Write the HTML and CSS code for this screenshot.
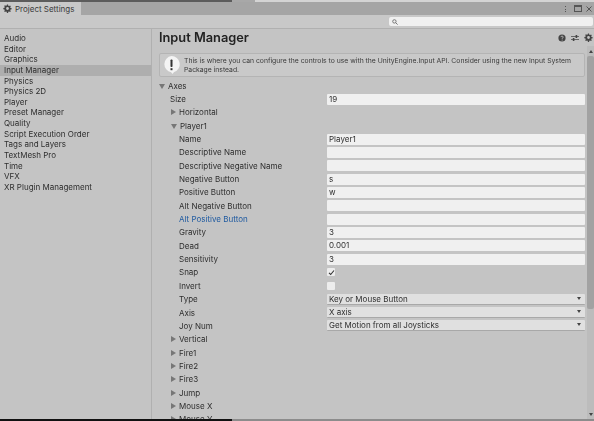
FILE: index.html
```html
<!DOCTYPE html>
<html lang="en">
<head>
  <meta charset="UTF-8">
  <title>Project Settings</title>
  <link rel="stylesheet" href="styles.css">
</head>
<body>
  <div class="window">
    <div class="edge edge-top"></div>
    <div class="tabbar">
      <div class="tab">
        <svg class="gear" width="9" height="9" viewBox="0 0 16 16"><path d="M7 1h2l.4 2 1.4.6 1.7-1.1 1.4 1.4-1.1 1.7.6 1.4 2 .4v2l-2 .4-.6 1.4 1.1 1.7-1.4 1.4-1.7-1.1-1.4.6-.4 2H7l-.4-2-1.4-.6-1.7 1.1-1.4-1.4 1.1-1.7-.6-1.4-2-.4V7l2-.4.6-1.4-1.1-1.7 1.4-1.4 1.7 1.1 1.4-.6zM8 5.5a2.5 2.5 0 1 0 0 5 2.5 2.5 0 0 0 0-5z" fill="#444" fill-rule="evenodd"/></svg>
        Project Settings
      </div>
      <div class="winbtns">
        <span class="dots"></span>
        <span class="maxbtn"></span>
        <svg width="6" height="6" viewBox="0 0 6 6"><path d="M.5.5l5 5M5.5.5l-5 5" stroke="#555" stroke-width="1"/></svg>
      </div>
    </div>
    <div class="toolbar">
      <div class="search">
        <svg width="6" height="6" viewBox="0 0 6 6"><circle cx="2.4" cy="2.4" r="1.7" fill="none" stroke="#777"/><path d="M3.6 3.6L5.6 5.6" stroke="#777"/></svg>
      </div>
    </div>
    <div class="panes">
      <ul class="sidebar">
        <li>Audio</li>
        <li>Editor</li>
        <li>Graphics</li>
        <li class="selected">Input Manager</li>
        <li>Physics</li>
        <li>Physics 2D</li>
        <li>Player</li>
        <li>Preset Manager</li>
        <li>Quality</li>
        <li>Script Execution Order</li>
        <li>Tags and Layers</li>
        <li>TextMesh Pro</li>
        <li>Time</li>
        <li>VFX</li>
        <li>XR Plugin Management</li>
      </ul>
      <div class="content">
        <div class="titlerow">
          <h1>Input Manager</h1>
          <div class="titleicons">
            <svg width="8" height="8" viewBox="0 0 8 8"><circle cx="4" cy="4" r="3.6" fill="#444"/><path d="M2.9 3.1c0-1.4 2.3-1.4 2.3 0 0 .9-1.1.8-1.1 1.7" fill="none" stroke="#ccc" stroke-width=".8"/><circle cx="4.1" cy="6" r=".5" fill="#ccc"/></svg>
            <svg width="8" height="8" viewBox="0 0 8 8"><path d="M0 2.5h8M0 5.5h8" stroke="#666"/><rect x="4.6" y="1" width="1.6" height="3" fill="#444"/><rect x="1.8" y="4" width="1.6" height="3" fill="#444"/></svg>
            <svg width="9" height="9" viewBox="0 0 16 16"><path d="M7 1h2l.4 2 1.4.6 1.7-1.1 1.4 1.4-1.1 1.7.6 1.4 2 .4v2l-2 .4-.6 1.4 1.1 1.7-1.4 1.4-1.7-1.1-1.4.6-.4 2H7l-.4-2-1.4-.6-1.7 1.1-1.4-1.4 1.1-1.7-.6-1.4-2-.4V7l2-.4.6-1.4-1.1-1.7 1.4-1.4 1.7 1.1 1.4-.6zM8 5.5a2.5 2.5 0 1 0 0 5 2.5 2.5 0 0 0 0-5z" fill="#444" fill-rule="evenodd"/></svg>
          </div>
        </div>
        <div class="scrollarea">
          <div class="inspector">
            <div class="helpbox">
              <svg class="helpicon" width="19" height="20" viewBox="0 0 19 20"><path d="M9.5 1a8.2 8.2 0 0 1 2.6 16l-1.6 2-1.4-1.8A8.2 8.2 0 0 1 9.5 1z" fill="#f4f4f4"/><rect x="8.5" y="4.5" width="2" height="7.5" rx=".8" fill="#333"/><rect x="8.5" y="13.2" width="2" height="2" fill="#333"/></svg>
              <p>This is where you can configure the controls to use with the UnityEngine.Input API. Consider using the new Input System Package instead.</p>
            </div>
            <div class="row head"><span class="arrow down"></span>Axes</div>
            <div class="row lvl1"><label>Size</label><span class="field">19</span></div>
            <div class="row fold1"><span class="arrow"></span>Horizontal</div>
            <div class="row fold1"><span class="arrow down"></span>Player1</div>
            <div class="row lvl2"><label>Name</label><span class="field">Player1</span></div>
            <div class="row lvl2"><label>Descriptive Name</label><span class="field"></span></div>
            <div class="row lvl2"><label>Descriptive Negative Name</label><span class="field"></span></div>
            <div class="row lvl2"><label>Negative Button</label><span class="field">s</span></div>
            <div class="row lvl2"><label>Positive Button</label><span class="field">w</span></div>
            <div class="row lvl2"><label>Alt Negative Button</label><span class="field"></span></div>
            <div class="row lvl2"><label class="hover">Alt Positive Button</label><span class="field"></span></div>
            <div class="row lvl2"><label>Gravity</label><span class="field">3</span></div>
            <div class="row lvl2"><label>Dead</label><span class="field">0.001</span></div>
            <div class="row lvl2"><label>Sensitivity</label><span class="field">3</span></div>
            <div class="row lvl2"><label>Snap</label><span class="check"><svg width="7" height="7" viewBox="0 0 7 7"><path d="M1 3.8l1.7 1.7L6 1.5" fill="none" stroke="#333" stroke-width="1.1"/></svg></span></div>
            <div class="row lvl2"><label>Invert</label><span class="check"></span></div>
            <div class="row lvl2"><label>Type</label><span class="select">Key or Mouse Button</span></div>
            <div class="row lvl2"><label>Axis</label><span class="select">X axis</span></div>
            <div class="row lvl2"><label>Joy Num</label><span class="select">Get Motion from all Joysticks</span></div>
            <div class="row fold1"><span class="arrow"></span>Vertical</div>
            <div class="row fold1"><span class="arrow"></span>Fire1</div>
            <div class="row fold1"><span class="arrow"></span>Fire2</div>
            <div class="row fold1"><span class="arrow"></span>Fire3</div>
            <div class="row fold1"><span class="arrow"></span>Jump</div>
            <div class="row fold1"><span class="arrow"></span>Mouse X</div>
            <div class="row fold1"><span class="arrow"></span>Mouse Y</div>
          </div>
          <div class="scrollbar">
            <span class="sb-up"></span>
            <div class="sb-track"><div class="sb-thumb"></div></div>
            <span class="sb-down"></span>
          </div>
        </div>
      </div>
    </div>
    <div class="edge edge-bottom"></div>
  </div>
</body>
</html>
```

FILE: styles.css
```css
* {
  box-sizing: border-box;
}

html, body {
  margin: 0;
  height: 100%;
  overflow: hidden;
}

body {
  background: #c4c4c4;
  color: #2e2e2e;
  font-family: "Inter", "Liberation Sans", sans-serif;
  font-size: 8px;
}

/* the source shot is soft, so take the edge off the text */
.window {
  height: 421px;
  display: flex;
  flex-direction: column;
  filter: blur(0.35px);
}

/* what's left of the editor behind the window */
.edge {
  height: 2px;
  flex-shrink: 0;
}

.edge-top {
  background: linear-gradient(to right, #5c5c5c 232px, #a8a8a8 232px, #a8a8a8 255px, #d4d4d4 255px);
}

.edge-bottom {
  background: linear-gradient(to right, #111 232px, #8c8c8c 232px);
}

.tabbar {
  height: 13px;
  background: #a5a5a5;
  display: flex;
  justify-content: space-between;
  flex-shrink: 0;
}

.tab {
  width: 81px;
  background: #c9c9c9;
  display: flex;
  align-items: center;
  gap: 3px;
  padding-left: 3px;
  color: #3c3c3c;
}

.winbtns {
  display: flex;
  align-items: center;
  padding-right: 2px;
}

.dots {
  width: 1px;
  height: 6px;
  margin-right: 8px;
  background: repeating-linear-gradient(#555 0, #555 1px, transparent 1px, transparent 2.5px);
}

.maxbtn {
  width: 8px;
  height: 7px;
  margin-right: 4px;
  border: 1px solid #555;
  border-top-width: 2px;
}

.toolbar {
  height: 14px;
  background: #c8c8c8;
  border-bottom: 1px solid #b0b0b0;
  display: flex;
  justify-content: flex-end;
  align-items: center;
  padding: 0 1px 0 0;
  flex-shrink: 0;
}

.search {
  width: 204px;
  height: 9px;
  background: #f0f0f0;
  border-radius: 2px;
  display: flex;
  align-items: center;
  padding-left: 3px;
}

.panes {
  flex: 1;
  display: flex;
  min-height: 0;
}

.sidebar {
  width: 152px;
  margin: 0;
  padding: 4px 0 0;
  list-style: none;
  border-right: 1px solid #b0b0b0;
  flex-shrink: 0;
}

.sidebar li {
  height: 10.65px;
  line-height: 10.65px;
  padding-left: 4px;
}

.sidebar .selected {
  background: #aeaeae;
}

.content {
  flex: 1;
  display: flex;
  flex-direction: column;
  min-width: 0;
}

.titlerow {
  height: 17px;
  padding: 0 1px 0 7px;
  display: flex;
  justify-content: space-between;
  align-items: center;
  flex-shrink: 0;
}

h1 {
  margin: 0;
  font-size: 12.8px;
  font-weight: 600;
  color: #222;
}

.titleicons {
  display: flex;
  align-items: center;
  gap: 5px;
}

.scrollarea {
  flex: 1;
  display: flex;
  min-height: 0;
}

.inspector {
  flex: 1;
  min-width: 0;
  overflow: hidden;
  padding: 7px 2px 0 7px;
}

.helpbox {
  height: 24px;
  background: #c9c9c9;
  border: 1px solid #b4b4b4;
  border-radius: 2px;
  display: flex;
  align-items: center;
  gap: 3px;
  padding-left: 2px;
  margin-bottom: 2px;
}

.helpicon {
  flex-shrink: 0;
}

.helpbox p {
  margin: 0;
  font-size: 6.8px;
  line-height: 9px;
  color: #3a3a3a;
}

.row {
  height: 13.35px;
  display: flex;
  align-items: center;
}

.row label {
  flex-shrink: 0;
}

.lvl1 {
  padding-left: 11px;
}

.lvl1 label {
  width: 157px;
}

.fold1 {
  padding-left: 12px;
}

.lvl2 {
  padding-left: 20px;
}

.lvl2 label {
  width: 148px;
}

.hover {
  color: #1f5aa0;
}

.arrow {
  width: 0;
  height: 0;
  margin-right: 3px;
  border-style: solid;
  border-width: 3px 0 3px 5px;
  border-color: transparent transparent transparent #777;
}

.arrow.down {
  margin-top: 1px;
  border-width: 5px 3px 0;
  border-color: #777 transparent transparent;
}

.field,
.select {
  flex: 1;
  height: 11px;
  line-height: 11px;
  padding-left: 2px;
  border-radius: 1px;
}

.field {
  background: #f0f0f0;
}

.select {
  background: #e0e0e0;
  border-bottom: 1px solid #a8a8a8;
  position: relative;
}

.select::after {
  content: "";
  position: absolute;
  right: 4px;
  top: 3px;
  border-style: solid;
  border-width: 3px 2.5px 0;
  border-color: #444 transparent transparent;
}

.check {
  width: 8px;
  height: 8px;
  background: #ededed;
  border-radius: 1px;
  display: flex;
  align-items: center;
  justify-content: center;
}

.scrollbar {
  width: 7px;
  flex-shrink: 0;
  background: #bcbcbc;
  display: flex;
  flex-direction: column;
  align-items: center;
}

.sb-up,
.sb-down {
  width: 0;
  height: 0;
  flex-shrink: 0;
  border-style: solid;
  border-color: transparent;
}

.sb-up {
  margin-top: 4px;
  border-width: 0 2.5px 3px;
  border-bottom-color: #444;
}

.sb-down {
  margin-bottom: 3px;
  border-width: 3px 2.5px 0;
  border-top-color: #444;
}

.sb-track {
  flex: 1;
  width: 100%;
  padding-top: 3px;
}

.sb-thumb {
  height: 253px;
  background: #a2a2a2;
  border-radius: 2px;
}
```
